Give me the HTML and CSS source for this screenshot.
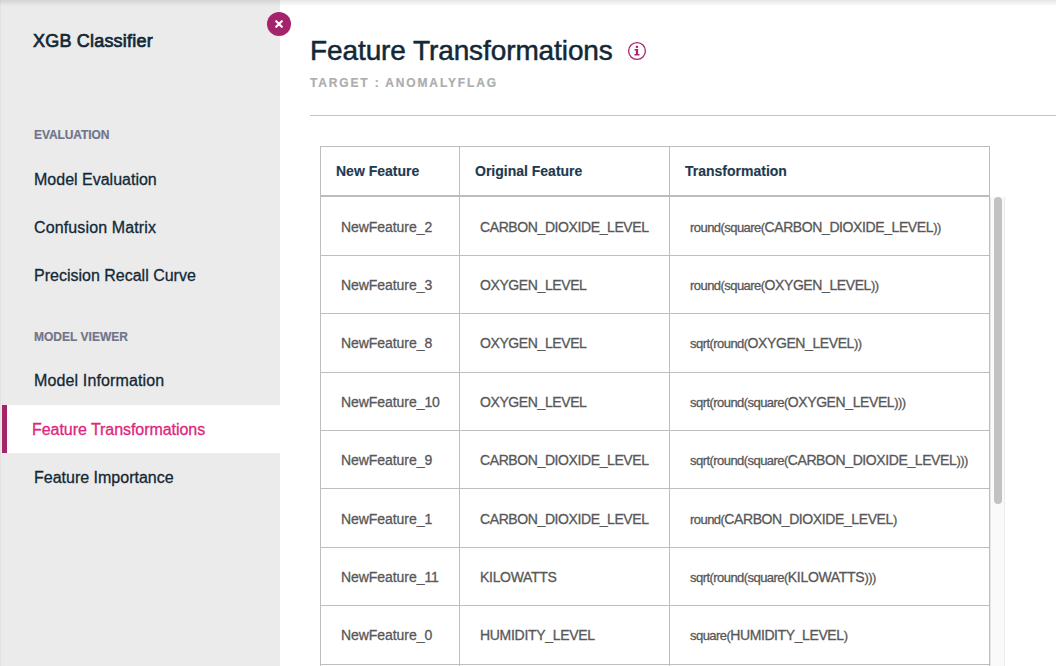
FILE: index.html
```
<!DOCTYPE html>
<html lang="en">
<head>
<meta charset="utf-8">
<title>Feature Transformations</title>
<link rel="stylesheet" href="styles.css">
</head>
<body>
<div class="app">
  <aside class="sidebar">
    <h2 class="model-name">XGB Classifier</h2>
    <button class="close" aria-label="Close">
      <svg width="24" height="24" viewBox="0 0 24 24"><path d="M9.2 9.2l5.6 5.6M14.8 9.2l-5.6 5.6" stroke="#fff" stroke-width="2.1" stroke-linecap="round"/></svg>
    </button>
    <nav class="nav">
      <h3 class="group evaluation">EVALUATION</h3>
      <a class="item">Model Evaluation</a>
      <a class="item wide">Confusion Matrix</a>
      <a class="item">Precision Recall Curve</a>
      <h3 class="group viewer">MODEL VIEWER</h3>
      <a class="item wide">Model Information</a>
      <a class="item low active">Feature Transformations</a>
      <a class="item low">Feature Importance</a>
    </nav>
  </aside>
  <main class="main">
    <header class="page-head">
      <div class="title-row">
        <h1 class="title">Feature Transformations</h1>
        <svg class="info" width="20" height="20" viewBox="0 0 20 20"><circle cx="10" cy="10" r="8.4" fill="none" stroke="#a8246f" stroke-width="1.3"/><rect x="8.8" y="4.8" width="2.3" height="2.1" fill="#a8246f"/><path d="M7.6 8.1h3.5v5h1.4v1.4H7.5v-1.4h1.4V9.5H7.6z" fill="#a8246f"/></svg>
      </div>
      <p class="target">TARGET : ANOMALYFLAG</p>
    </header>
    <div class="table">
      <div class="row head"><span>New Feature</span><span>Original Feature</span><span class="tr">Transformation</span></div>
      <div class="body">
        <div class="rows">
          <div class="row tall low"><span>NewFeature_2</span><span class="caps">CARBON_DIOXIDE_LEVEL</span><span class="caps"><i>round(square(</i>CARBON_DIOXIDE_LEVEL<i>))</i></span></div>
          <div class="row"><span>NewFeature_3</span><span class="caps">OXYGEN_LEVEL</span><span class="caps"><i>round(square(</i>OXYGEN_LEVEL<i>))</i></span></div>
          <div class="row tall"><span>NewFeature_8</span><span class="caps">OXYGEN_LEVEL</span><span class="caps"><i>sqrt(round(</i>OXYGEN_LEVEL<i>))</i></span></div>
          <div class="row"><span>NewFeature_10</span><span class="caps">OXYGEN_LEVEL</span><span class="caps"><i>sqrt(round(square(</i>OXYGEN_LEVEL<i>)))</i></span></div>
          <div class="row"><span>NewFeature_9</span><span class="caps">CARBON_DIOXIDE_LEVEL</span><span class="caps"><i>sqrt(round(square(</i>CARBON_DIOXIDE_LEVEL<i>)))</i></span></div>
          <div class="row tall low"><span>NewFeature_1</span><span class="caps">CARBON_DIOXIDE_LEVEL</span><span class="caps"><i>round(</i>CARBON_DIOXIDE_LEVEL<i>)</i></span></div>
          <div class="row"><span>NewFeature_11</span><span class="caps word">KILOWATTS</span><span class="caps word"><i>sqrt(round(square(</i>KILOWATTS<i>)))</i></span></div>
          <div class="row tall"><span>NewFeature_0</span><span class="caps word">HUMIDITY_LEVEL</span><span class="caps"><i>square(</i>HUMIDITY_LEVEL<i>)</i></span></div>
          <div class="row"><span></span><span></span><span></span></div>
        </div>
        <div class="track"><div class="thumb"></div></div>
      </div>
    </div>
  </main>
  <div class="top-shadow"></div>
</div>
</body>
</html>
```
FILE: styles.css
```
* { box-sizing: border-box; margin: 0; padding: 0; }
body { font-family: "Liberation Sans", Arial, sans-serif; background: #fff; overflow: hidden; }
.app { position: relative; display: flex; height: 666px; overflow: hidden; }
.sidebar { position: relative; flex: none; width: 280px; background: #ebebeb; border-left: 1px solid #e2e2e2; padding-top: 30px; }
.model-name { margin-left: 32px; height: 22px; font-size: 18px; line-height: 22px; font-weight: 400; letter-spacing: .2px; color: #132836; -webkit-text-stroke: .7px #132836; }
.close { position: absolute; top: 12px; right: -11px; width: 24px; height: 24px; border: 0; border-radius: 50%; background: #a4246c; z-index: 2; }
.close svg { display: block; }
.nav { display: flex; flex-direction: column; padding-top: 75px; }
.group { margin-left: 33px; height: 16px; font-size: 12px; line-height: 16px; font-weight: 700; color: #71758a; -webkit-text-stroke: .2px; }
.evaluation { letter-spacing: -.1px; margin-bottom: 13px; }
.viewer { letter-spacing: .02px; margin: 29px 0 12px 33px; }
.nav .item { height: 48px; line-height: 48px; padding-left: 33px; font-size: 16px; color: #132836; -webkit-text-stroke: .3px; }
.nav .wide { letter-spacing: .13px; }
.nav .low { line-height: 50px; }
.nav .active { background: #fff; border-left: 5px solid #a4246c; margin-left: 1px; padding-left: 25px; letter-spacing: -.05px; color: #e0257c; }
.main { flex: 1; min-width: 0; padding: 32px 0 0 30px; }
.page-head { height: 84px; border-bottom: 1px solid #c4c4c4; }
.title-row { display: flex; align-items: center; height: 36px; gap: 14px; }
.title { font-size: 28px; line-height: 36px; font-weight: 400; letter-spacing: -.1px; padding-top: 2px; color: #132836; -webkit-text-stroke: .5px; }
.info { margin-top: 2px; }
.target { margin-top: 7px; height: 16px; line-height: 16px; font-size: 12px; font-weight: 700; letter-spacing: 1.85px; color: #adadad; -webkit-text-stroke: .2px; }
.table { margin: 30px 0 0 10px; width: 685px; }
.row { display: grid; grid-template-columns: 140px 210px 320px; width: 670px; height: 58px; line-height: 59px; font-size: 14px; letter-spacing: -.06px; color: #585858; border-bottom: 1px solid #bdbdbd; -webkit-text-stroke: .3px; }
.row > span { height: 100%; min-height: 0; border-right: 1px solid #bdbdbd; padding-left: 20px; white-space: nowrap; }
.row > span:first-child { border-left: 1px solid #bdbdbd; }
.rows .row { grid-template-rows: 100%; }
.row.tall { height: 59px; line-height: 59px; }
.row.low { line-height: 61px; }
.row .caps { letter-spacing: -.4px; }
.row .word { letter-spacing: -.3px; }
.row i { font-style: normal; font-size: 13px; letter-spacing: -.55px; }
.row.head { height: 51px; line-height: 48px; border-top: 1px solid #bdbdbd; border-bottom-width: 2px; font-weight: 700; letter-spacing: 0; color: #1d3a50; -webkit-text-stroke: .15px; }
.row.head > span { padding-left: 15px; }
.body { display: flex; height: 470px; overflow: hidden; }
.track { width: 15px; height: 470px; background: #fafafa; border-left: 1px solid #e8e8e8; border-right: 1px solid #ebebeb; padding-left: 3px; }
.thumb { width: 8px; height: 307px; border-radius: 4px; background: #c2c2c2; }
.top-shadow { position: absolute; top: 0; left: 0; right: 0; height: 6px; background: linear-gradient(rgba(0,0,0,.1), rgba(0,0,0,0)); }
```
